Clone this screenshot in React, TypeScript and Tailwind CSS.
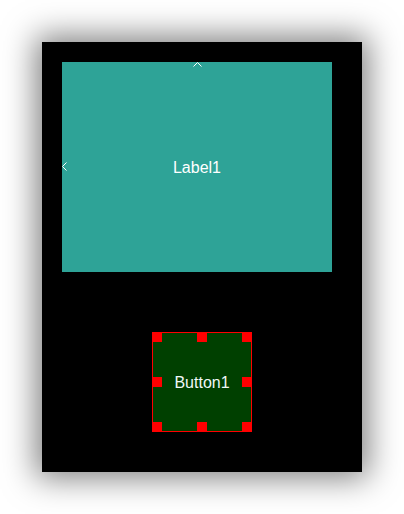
import React from "react";

function Handle() {
  return <div className="w-[10px] h-[10px] bg-[#ff0000]" />;
}

export default function App() {
  return (
    <div className="w-[404px] h-[514px] bg-white pt-[42px] pl-[42px] font-['Liberation_Sans',Arial,sans-serif]">
      <div className="w-[320px] h-[430px] bg-black flex flex-col items-start pt-[20px] pl-[20px] shadow-[0_0_30px_6px_rgba(0,0,0,0.5)]">
        <div className="relative w-[270px] h-[210px] bg-[#2ea397] flex items-center justify-center text-white text-[16px]">
          <svg className="absolute left-[131px] top-0" width="9" height="5" viewBox="0 0 9 5">
            <path d="M0.5 4.5 L4.5 0.5 L8.5 4.5" fill="none" stroke="white" strokeWidth="1" />
          </svg>
          <svg className="absolute left-0 top-[100px]" width="5" height="9" viewBox="0 0 5 9">
            <path d="M4.5 0.5 L0.5 4.5 L4.5 8.5" fill="none" stroke="white" strokeWidth="1" />
          </svg>
          <span className="pt-[1px]">Label1</span>
        </div>
        <div className="relative mt-[60px] ml-[90px] w-[100px] h-[100px] bg-[#004000] border border-[#ff0000] flex items-center justify-center text-[#f0f8f8] text-[16px]">
          <span className="pt-[1px]">Button1</span>
          <div className="absolute -inset-px flex flex-col justify-between">
            <div className="flex justify-between">
              <Handle />
              <Handle />
              <Handle />
            </div>
            <div className="flex justify-between">
              <Handle />
              <Handle />
            </div>
            <div className="flex justify-between">
              <Handle />
              <Handle />
              <Handle />
            </div>
          </div>
        </div>
      </div>
    </div>
  );
}
